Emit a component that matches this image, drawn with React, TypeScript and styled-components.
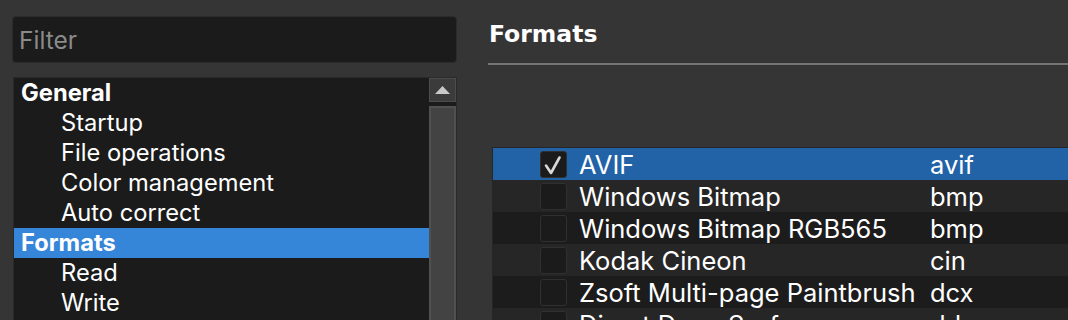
import React from "react";
import styled, { createGlobalStyle } from "styled-components";

const GlobalStyle = createGlobalStyle`
  html, body {
    margin: 0;
    padding: 0;
    background: #353535;
  }
  body {
    font-family: Inter, "Noto Sans", sans-serif;
    color: #ffffff;
  }
`;

const Page = styled.div`
  display: flex;
  width: 1068px;
  height: 320px;
  overflow: hidden;
  background: #353535;
`;

const Sidebar = styled.div`
  display: flex;
  flex-direction: column;
  gap: 14px;
  flex-shrink: 0;
  width: 445px;
  padding: 16px 0 0 12px;
`;

const FilterInput = styled.input`
  box-sizing: border-box;
  flex-shrink: 0;
  width: 100%;
  height: 47px;
  padding: 0 0 0 6px;
  border: 1px solid #2b2b2b;
  border-radius: 4px;
  background: #1b1b1b;
  color: #e0e0e0;
  font-family: Inter, "Noto Sans", sans-serif;
  font-size: 24.5px;
  outline: none;

  &::placeholder {
    color: #8a8a8a;
  }
`;

const TreeBox = styled.div`
  display: flex;
  flex: 1;
  min-height: 0;
  overflow: hidden;
  margin-left: 1px;
  border: 1px solid #2a2a2a;
  border-bottom: none;
  background: #1b1b1b;
`;

const TreeList = styled.div`
  flex: 1;
`;

const TreeRow = styled.div<{ $level: number; $selected?: boolean }>`
  height: 30px;
  line-height: 30px;
  padding-left: ${(p) => (p.$level === 0 ? 7 : 47)}px;
  font-size: 23.7px;
  font-weight: ${(p) => (p.$level === 0 ? 700 : 400)};
  color: #ffffff;
  white-space: nowrap;
  background: ${(p) => (p.$selected ? "#3585d9" : "transparent")};
`;

const Scrollbar = styled.div`
  display: flex;
  flex-direction: column;
  gap: 4px;
  width: 27px;
  flex-shrink: 0;
`;

const ScrollButton = styled.div`
  display: flex;
  align-items: center;
  justify-content: center;
  box-sizing: border-box;
  height: 24px;
  flex-shrink: 0;
  border: 1px solid #4c4c4c;
  background: #3b3b3b;
`;

const ScrollGroove = styled.div`
  flex: 1;
  box-sizing: border-box;
  border: 2px solid #505050;
  border-bottom: none;
  background: #434343;
`;

const Content = styled.div`
  flex: 1;
  display: flex;
  flex-direction: column;
  margin-left: 31px;
  padding-top: 20px;
`;

const Title = styled.div`
  padding-left: 1px;
  font-family: "DejaVu Sans", Inter, sans-serif;
  font-size: 23.5px;
  font-weight: 700;
  line-height: 28px;
  color: #ffffff;
`;

const Divider = styled.div`
  flex-shrink: 0;
  height: 2px;
  margin-top: 15px;
  background: #747474;
`;

const Table = styled.div`
  margin: 82px 0 0 4px;
  border-top: 1px solid #262626;
  border-left: 1px solid #262626;
`;

const Row = styled.div<{ $index: number; $selected?: boolean }>`
  display: flex;
  align-items: center;
  flex-shrink: 0;
  height: 32px;
  padding-left: 47px;
  font-size: 25.5px;
  white-space: nowrap;
  background: ${(p) =>
    p.$selected ? "#2263a8" : p.$index % 2 === 1 ? "#262626" : "#1c1c1c"};
`;

const CheckBox = styled.div`
  display: flex;
  align-items: center;
  justify-content: center;
  box-sizing: border-box;
  width: 27px;
  height: 27px;
  flex-shrink: 0;
  border: 1px solid #303030;
  border-radius: 3px;
  background: #1b1b1b;
`;

const NameCell = styled.div`
  width: 351px;
  flex-shrink: 0;
  margin-left: 12px;
  color: #ffffff;
`;

const ExtCell = styled.div`
  color: #ffffff;
`;

const tree = [
  { label: "General", level: 0 },
  { label: "Startup", level: 1 },
  { label: "File operations", level: 1 },
  { label: "Color management", level: 1 },
  { label: "Auto correct", level: 1 },
  { label: "Formats", level: 0, selected: true },
  { label: "Read", level: 1 },
  { label: "Write", level: 1 },
];

const formats = [
  { name: "AVIF", ext: "avif", checked: true },
  { name: "Windows Bitmap", ext: "bmp" },
  { name: "Windows Bitmap RGB565", ext: "bmp" },
  { name: "Kodak Cineon", ext: "cin" },
  { name: "Zsoft Multi-page Paintbrush", ext: "dcx" },
  { name: "Direct Draw Surface", ext: "dds" },
];

export default function App() {
  return (
    <Page>
      <GlobalStyle />
      <Sidebar>
        <FilterInput placeholder="Filter" />
        <TreeBox>
          <TreeList>
            {tree.map((item) => (
              <TreeRow
                key={item.label}
                $level={item.level}
                $selected={item.selected}
              >
                {item.label}
              </TreeRow>
            ))}
          </TreeList>
          <Scrollbar>
            <ScrollButton>
              <svg width="15" height="8" viewBox="0 0 15 8">
                <polygon points="7.5,0 15,8 0,8" fill="#c8c8c8" />
              </svg>
            </ScrollButton>
            <ScrollGroove />
          </Scrollbar>
        </TreeBox>
      </Sidebar>
      <Content>
        <Title>Formats</Title>
        <Divider />
        <Table>
          {formats.map((f, i) => (
            <Row key={f.name} $index={i} $selected={i === 0}>
              <CheckBox>
                {f.checked && (
                  <svg width="25" height="25" viewBox="0 0 25 25">
                    <path
                      d="M5 13.5 L10 21 L18.5 5.5"
                      fill="none"
                      stroke="#d8d8d8"
                      strokeWidth="2.6"
                      strokeLinecap="round"
                      strokeLinejoin="round"
                    />
                  </svg>
                )}
              </CheckBox>
              <NameCell>{f.name}</NameCell>
              <ExtCell>{f.ext}</ExtCell>
            </Row>
          ))}
        </Table>
      </Content>
    </Page>
  );
}
